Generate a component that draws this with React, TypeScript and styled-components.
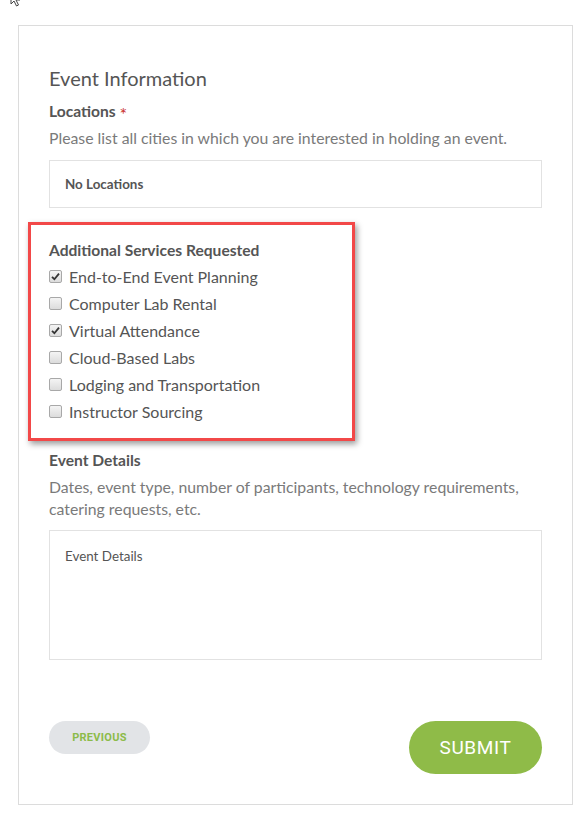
import React from 'react';
import styled, { createGlobalStyle } from 'styled-components';

const Global = createGlobalStyle`
  body {
    margin: 0;
    background: #fff;
    font-family: Lato, "Open Sans", sans-serif;
    color: #555;
  }
`

const Page = styled.div`
  position: relative;
  padding: 25px 0 10px 18px;
`
const Cursor = styled.svg`
  position: absolute;
  left: 10px;
  top: -9px;
`
const Card = styled.form`
  width: 493px;
  border: 1px solid #dcdcdc;
  padding: 40px 30px 30px 30px;
`
const Title = styled.h2`
  margin: 0;
  font-size: 20px;
  line-height: 24px;
  font-weight: 400;
  color: #555;
`
const Label = styled.div<{ $top?: number }>`
  margin-top: ${p => p.$top ?? 0}px;
  font-size: 15.6px;
  line-height: 22px;
  font-weight: 700;
  color: #555;
`
const Required = styled.span`
  color: #c9302c;
  font-weight: 400;
  font-size: 18px;
  vertical-align: -4px;
  line-height: 0;
`
const Hint = styled.p`
  margin: 5px 0 0;
  font-size: 15.8px;
  line-height: 22px;
  color: #7a7a7a;
`
const Field = styled.div<{ $height: number; $top: number }>`
  margin-top: ${p => p.$top}px;
  height: ${p => p.$height}px;
  box-sizing: border-box;
  border: 1px solid #e2e2e2;
  padding: ${p => (p.$height > 60 ? '16px 15px' : '0 15px')};
  display: flex;
  align-items: ${p => (p.$height > 60 ? 'flex-start' : 'center')};
  font-size: 13.4px;
  line-height: 18px;
  color: #555;
`
const Placeholder = styled.span<{ $bold?: boolean }>`
  font-weight: ${p => (p.$bold ? 700 : 400)};
`
const Group = styled.div`
  position: relative;
  margin-top: 31px;
`
const Highlight = styled.div`
  position: absolute;
  left: -21px;
  top: -17px;
  width: 327px;
  height: 219px;
  box-sizing: border-box;
  border: 3px solid #f24848;
  box-shadow: 2px 3px 6px rgba(0, 0, 0, 0.4);
  pointer-events: none;
`
const Options = styled.div`
  margin-top: 2px;
  display: flex;
  flex-direction: column;
`
const Option = styled.label`
  height: 27px;
  display: flex;
  align-items: center;
  gap: 7px;
  font-size: 16px;
  color: #555;
`
const Box = styled.span`
  width: 13px;
  height: 13px;
  box-sizing: border-box;
  border: 1px solid #a8a8a8;
  border-radius: 2px;
  background: linear-gradient(#f4f4f4, #dcdcdc);
  display: flex;
  align-items: center;
  justify-content: center;
`
const Actions = styled.div`
  margin-top: 61px;
  display: flex;
  justify-content: space-between;
  align-items: flex-start;
`
const PrevButton = styled.button`
  width: 101px;
  height: 33px;
  border: none;
  border-radius: 17px;
  background: #e2e4e7;
  color: #8cbb4a;
  font-family: Roboto, "Open Sans", sans-serif;
  font-size: 11px;
  font-weight: 700;
  letter-spacing: 0.3px;
`
const SubmitButton = styled.button`
  width: 133px;
  height: 53px;
  border: none;
  border-radius: 27px;
  background: #8fbb48;
  color: #fff;
  font-family: Roboto, "Open Sans", sans-serif;
  font-size: 19px;
  letter-spacing: 0.6px;
`

const services = [
  { name: 'End-to-End Event Planning', checked: true },
  { name: 'Computer Lab Rental', checked: false },
  { name: 'Virtual Attendance', checked: true },
  { name: 'Cloud-Based Labs', checked: false },
  { name: 'Lodging and Transportation', checked: false },
  { name: 'Instructor Sourcing', checked: false },
]

const Check = ({ on }: { on: boolean }) => (
  <Box>
    {on && (
      <svg width="9" height="9" viewBox="0 0 9 9">
        <path d="M1 4.8 L3.4 7.2 L8 1.6" fill="none" stroke="#333" strokeWidth="1.8" />
      </svg>
    )}
  </Box>
)

export default function App() {
  return (
    <Page>
      <Global />
      <Cursor width="12" height="16" viewBox="0 0 12 16">
        <path d="M1 1 L1 13 L4 10 L6.5 15 L8.5 14 L6 9 L10 9 Z" fill="#fff" stroke="#444" strokeWidth="1" />
      </Cursor>
      <Card onSubmit={e => e.preventDefault()}>
        <Title>Event Information</Title>
        <Label $top={10}>
          Locations <Required>*</Required>
        </Label>
        <Hint>Please list all cities in which you are interested in holding an event.</Hint>
        <Field $height={48} $top={11}>
          <Placeholder $bold>No Locations</Placeholder>
        </Field>

        <Group>
          <Highlight />
          <Label>Additional Services Requested</Label>
          <Options>
            {services.map(s => (
              <Option key={s.name}>
                <Check on={s.checked} />
                {s.name}
              </Option>
            ))}
          </Options>
        </Group>

        <Label $top={24}>Event Details</Label>
        <Hint>Dates, event type, number of participants, technology requirements, catering requests, etc.</Hint>
        <Field $height={130} $top={10}>
          <Placeholder>Event Details</Placeholder>
        </Field>

        <Actions>
          <PrevButton type="button">PREVIOUS</PrevButton>
          <SubmitButton type="submit">SUBMIT</SubmitButton>
        </Actions>
      </Card>
    </Page>
  )
}
